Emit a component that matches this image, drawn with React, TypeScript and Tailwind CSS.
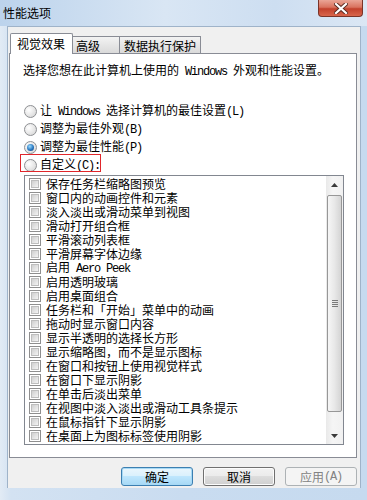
import React from "react";

const CJK = "font-['Noto_Sans_CJK_SC',sans-serif]";

function T({ s }: { s: string }) {
  const parts = s.split(/([\x20-\x7e]+)/);
  return (
    <>
      {parts.map((p, i) =>
        /^[\x20-\x7e]+$/.test(p) ? (
          <span key={i} className="font-['Liberation_Mono',monospace] tracking-[-1.2px] whitespace-pre">
            {p}
          </span>
        ) : (
          <span key={i}>{p}</span>
        )
      )}
    </>
  );
}

const items = [
  "保存任务栏缩略图预览",
  "窗口内的动画控件和元素",
  "淡入淡出或滑动菜单到视图",
  "滑动打开组合框",
  "平滑滚动列表框",
  "平滑屏幕字体边缘",
  "启用 Aero Peek",
  "启用透明玻璃",
  "启用桌面组合",
  "任务栏和「开始」菜单中的动画",
  "拖动时显示窗口内容",
  "显示半透明的选择长方形",
  "显示缩略图，而不是显示图标",
  "在窗口和按钮上使用视觉样式",
  "在窗口下显示阴影",
  "在单击后淡出菜单",
  "在视图中淡入淡出或滑动工具条提示",
  "在鼠标指针下显示阴影",
  "在桌面上为图标标签使用阴影",
];

function Radio({ checked }: { checked?: boolean }) {
  return (
    <div className="w-[13px] h-[13px] rounded-full border border-[#8e9093] bg-[radial-gradient(circle_at_35%_35%,#ffffff,#e4e4e4_60%,#cfcfcf)] flex items-center justify-center shrink-0">
      {checked && (
        <div className="w-[7px] h-[7px] rounded-full bg-[radial-gradient(circle_at_40%_35%,#9bdcff,#2a78c0_55%,#0f3f73)]" />
      )}
    </div>
  );
}

function Check() {
  return (
    <div className="w-[12px] h-[12px] border border-[#8f8f8f] bg-white p-[1px] shrink-0">
      <div className="w-full h-full border border-[#bdbdbd] bg-[linear-gradient(135deg,#cfcfcf,#f3f3f3)]" />
    </div>
  );
}

function RadioRow({ label, checked }: { label: string; checked?: boolean }) {
  return (
    <div className="h-[18px] flex items-center gap-[3px] pl-[1px]">
      <Radio checked={checked} />
      <span className="leading-[14px]">
        <T s={label} />
      </span>
    </div>
  );
}

export default function App() {
  return (
    <div
      className={`w-[367px] h-[500px] overflow-hidden flex flex-col bg-[linear-gradient(90deg,#e2ebf5,#d3e2f2_3%,#c9dcf0_50%,#c6daef)] text-[12px] text-black ${CJK}`}
    >
      {/* title bar */}
      <div className="h-[26px] shrink-0 flex items-start bg-[linear-gradient(90deg,#bcd3ec,#d9e6f4_45%,#cddef1_75%,#dbe7f4)]">
        <span className="ml-[3px] mt-[6px] leading-[14px] text-[12px] text-black">性能选项</span>
        <div className="ml-auto mr-[4px] w-[45px] h-[17px] rounded-b-[4px] border border-t-0 border-[#7a3428] bg-[linear-gradient(180deg,#eaa596,#d9735f_45%,#c2412c_55%,#d8664c)] flex items-center justify-center">
          <svg width="14" height="11" viewBox="0 0 14 11">
            <path d="M2 1 L12 10 M12 1 L2 10" stroke="#5a2a20" strokeWidth="4" strokeLinecap="square" />
            <path d="M2 1 L12 10 M12 1 L2 10" stroke="#ffffff" strokeWidth="2.2" strokeLinecap="square" />
          </svg>
        </div>
      </div>

      {/* body */}
      <div className="ml-[7px] w-[354px] h-[462px] bg-[#f0f0f0] border-t border-x border-[#9fb3c9] pt-[6px] pl-[1px] pr-[3px] flex flex-col">
        {/* tabs */}
        <div className="h-[21px] flex items-end relative z-10 -mb-[1px]">
          <div className="ml-[1px] h-[21px] w-[63px] border border-b-0 border-[#898c95] bg-white pl-[6px] pt-[3px] leading-[14px] rounded-t-[2px]">
            视觉效果
          </div>
          <div className="h-[18px] w-[47px] border border-l-0 border-[#898c95] bg-[linear-gradient(180deg,#f3f3f3,#e6e6e6_50%,#dadada)] pl-[3px] pt-[2px] leading-[14px]">
            高级
          </div>
          <div className="h-[18px] w-[81px] border border-l-0 border-[#898c95] bg-[linear-gradient(180deg,#f3f3f3,#e6e6e6_50%,#dadada)] pl-[4px] pt-[2px] leading-[14px]">
            数据执行保护
          </div>
        </div>

        {/* panel */}
        <div className="w-[348px] h-[405px] border border-[#898c95] bg-white pt-[9px] pl-[13px] flex flex-col">
          <div className="leading-[14px] h-[14px]">
            <T s="选择您想在此计算机上使用的 Windows 外观和性能设置。" />
          </div>
          <div className="mt-[25px] flex flex-col">
            <RadioRow label="让 Windows 选择计算机的最佳设置(L)" />
            <RadioRow label="调整为最佳外观(B)" />
            <RadioRow label="调整为最佳性能(P)" checked />
            <div className="relative">
              <RadioRow label="自定义(C):" />
              <div className="absolute left-[-3px] top-[-2px] w-[81px] h-[18px] border border-[#e0262b]" />
            </div>
          </div>

          {/* list box */}
          <div className="mt-[1px] ml-[1px] w-[320px] h-[270px] border border-[#828790] bg-white flex">
            <div className="flex-1 pt-[1px] pl-[4px] flex flex-col">
              {items.map((it) => (
                <div key={it} className="h-[14px] flex items-center gap-[5px]">
                  <Check />
                  <span className="leading-[14px] whitespace-nowrap">
                    <T s={it} />
                  </span>
                </div>
              ))}
            </div>
            <div className="w-[17px] flex flex-col bg-[linear-gradient(90deg,#e9e9e9,#f5f5f5_40%,#f1f1f1)]">
              <div className="h-[17px] flex items-center justify-center">
                <svg width="7" height="4" viewBox="0 0 7 4">
                  <path d="M0 4 L3.5 0 L7 4 Z" fill="#3a3a3a" />
                </svg>
              </div>
              <div className="flex-1 pt-[2px] px-[1px]">
                <div className="h-[217px] rounded-[2px] border border-[#979797] bg-[linear-gradient(90deg,#f6f6f6,#e8e8e8_50%,#d4d4d4)] flex items-center justify-center">
                  <div className="flex flex-col gap-[1px]">
                    <div className="w-[6px] h-[1px] bg-[#7a7a7a]" />
                    <div className="w-[6px] h-[1px] bg-[#7a7a7a]" />
                    <div className="w-[6px] h-[1px] bg-[#7a7a7a]" />
                    <div className="w-[6px] h-[1px] bg-[#7a7a7a]" />
                  </div>
                </div>
              </div>
              <div className="h-[17px] flex items-center justify-center">
                <svg width="7" height="4" viewBox="0 0 7 4">
                  <path d="M0 0 L3.5 4 L7 0 Z" fill="#3a3a3a" />
                </svg>
              </div>
            </div>
          </div>
        </div>

        {/* buttons */}
        <div className="mt-[9px] flex justify-end gap-[10px]">
          <div className="w-[72px] h-[19px] rounded-[3px] border border-[#3c7fb1] shadow-[inset_0_0_0_1px_#a7d9f5] bg-[linear-gradient(180deg,#eaf6fd,#d9f0fc_50%,#bee6fd_50%,#a7d9f5)] flex items-center justify-center leading-[14px]">
            确定
          </div>
          <div className="w-[72px] h-[19px] rounded-[3px] border border-[#707070] shadow-[inset_0_0_0_1px_#fcfcfc] bg-[linear-gradient(180deg,#f2f2f2,#ebebeb_50%,#dddddd_50%,#cfcfcf)] flex items-center justify-center leading-[14px]">
            取消
          </div>
          <div className="w-[72px] h-[19px] rounded-[3px] border border-[#adb2b5] bg-[#f4f4f4] flex items-center justify-center leading-[14px] text-[#838383]">
            <T s="应用(A)" />
          </div>
        </div>
      </div>
    </div>
  );
}
